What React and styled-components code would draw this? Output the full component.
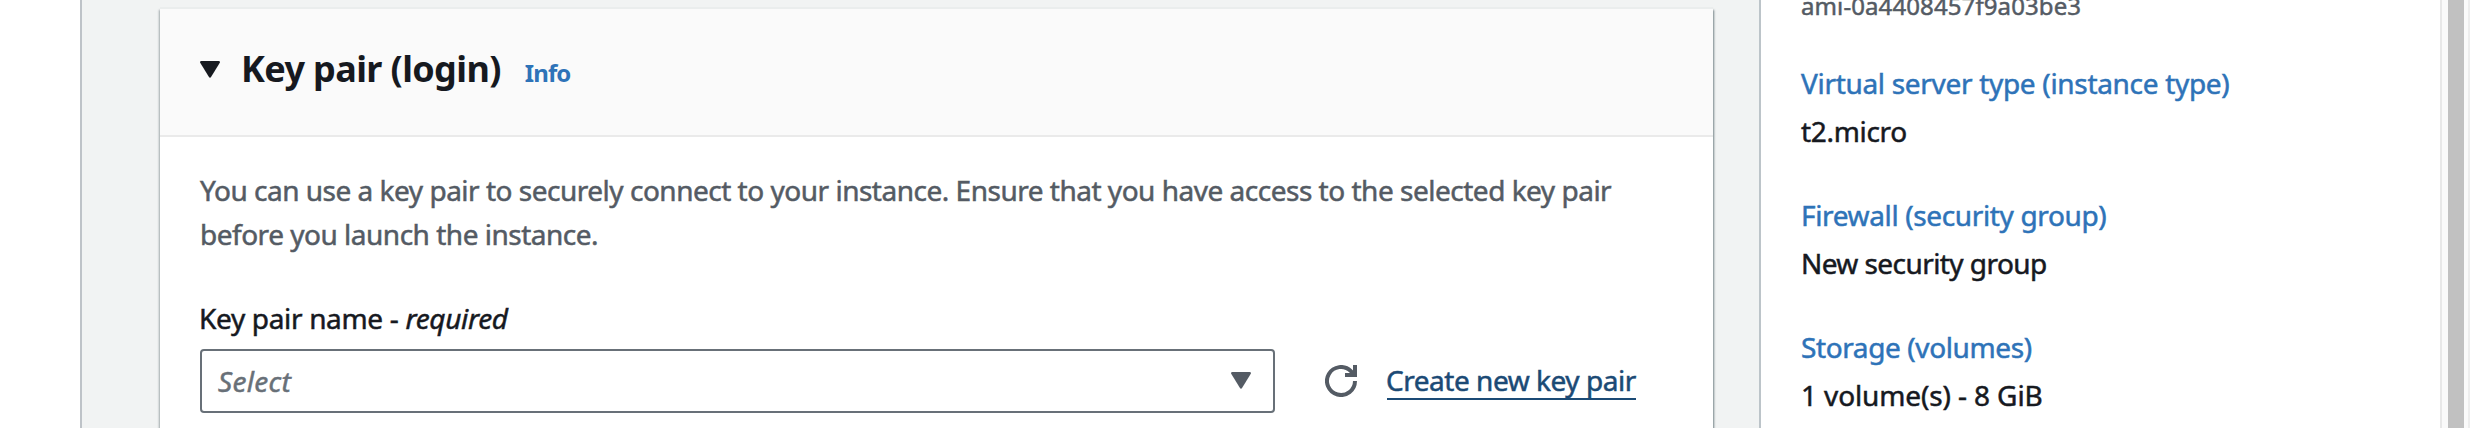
import React from 'react';
import styled, { createGlobalStyle } from 'styled-components';

const GlobalStyle = createGlobalStyle`
  * { box-sizing: border-box; }
  body {
    margin: 0;
    background: #fff;
    color: #16191f;
    font: 400 28px/44px "Noto Sans", "Open Sans", sans-serif;
    overflow: hidden;
  }
`;

const Page = styled.div`
  display: flex;
  width: 2488px;
  height: 428px;
  overflow: hidden;
`;

const Gutter = styled.div`
  flex: none;
  width: 80px;
  background: #fff;
`;

const Main = styled.main`
  flex: none;
  width: 1681px;
  padding: 9px 48px 0 78px;
  background: #f1f3f3;
  border-left: 2px solid #bec3c8;
  border-right: 2px solid #bcc4c9;
`;

const Card = styled.section`
  width: 1553px;
  height: 440px;
  background: #fff;
  box-shadow: 0 -2px 0 #eaeded, 1px 1px 2px rgba(0, 28, 36, 0.5), -1px 1px 2px rgba(0, 28, 36, 0.3);
`;

const CardHeader = styled.header`
  display: flex;
  height: 128px;
  padding: 35px 40px 0;
  background: #fafafa;
  border-bottom: 2px solid #eaeaea;
`;

const Caret = styled.svg`
  flex: none;
  display: block;
  width: 20px;
  height: 17px;
  margin-top: ${(p) => p.$top || 0}px;
  fill: ${(p) => p.$color};
`;

const Title = styled.h2`
  margin: 1px 0 0 21px;
  font-size: 36px;
  font-weight: 700;
  line-height: 48px;
  letter-spacing: -0.62px;
  white-space: nowrap;
`;

const InfoLink = styled.a`
  margin: 9px 0 0 24px;
  color: #2e73b8;
  font-size: 24px;
  font-weight: 700;
  line-height: 40px;
  letter-spacing: -0.9px;
`;

const CardBody = styled.div`
  padding: 31px 40px 0;
`;

const Text = styled.div`
  color: ${(p) => p.$color || '#16191f'};
  letter-spacing: ${(p) => p.$track || 0}px;
  -webkit-text-stroke: 0.5px currentColor;
  white-space: nowrap;
`;

const Description = styled(Text)`
  margin-bottom: 40px;
`;

const Label = styled(Text)`
  margin: 0 0 9px -1px;
`;

const FieldRow = styled.div`
  display: flex;
  align-items: center;
  height: 64px;
`;

const SelectBox = styled.div`
  display: flex;
  align-items: center;
  justify-content: space-between;
  width: 1075px;
  height: 64px;
  padding: 0 22px 1px 16px;
  border: 2px solid #687078;
  border-radius: 4px;
  background: #fff;
`;

const Placeholder = styled(Text)`
  font-style: italic;
`;

const RefreshIcon = styled.svg`
  display: block;
  width: 32px;
  height: 32px;
  margin-left: 50px;
  fill: none;
  stroke: #545b64;
  stroke-width: 4;
`;

const CreateLink = styled(Text)`
  width: 249px;
  height: 37px;
  margin: 0 0 0 30px;
  line-height: 34px;
  text-indent: -1px;
  border-bottom: 2px solid #1b4a75;
`;

const Summary = styled.aside`
  flex: none;
  display: flex;
  flex-direction: column;
  width: 679px;
  padding: 0 41px 0 40px;
  background: #fff;
`;

const AmiId = styled(Text)`
  margin: -10px 0 39px;
  font-size: 24px;
  line-height: 32px;
`;

const SummaryItem = styled.div`
  display: flex;
  flex-direction: column;
  gap: 4px;
  margin-bottom: 40px;
`;

const ScrollTrack = styled.div`
  flex: none;
  width: 30px;
  padding: 0 4px 0 6px;
  background: #fafafa;
  border-left: 2px solid #e8e8e8;
  border-right: 2px solid #ededed;
`;

const ScrollThumb = styled.div`
  width: 16px;
  height: 100%;
  background: #c1c1c1;
`;

const summary = [
  { name: 'Virtual server type (instance type)', value: 't2.micro', nameTrack: -0.31, valueTrack: -0.32 },
  { name: 'Firewall (security group)', value: 'New security group', nameTrack: -0.36, valueTrack: -0.57 },
  { name: 'Storage (volumes)', value: '1 volume(s) - 8 GiB', nameTrack: -0.39, valueTrack: -0.12 },
];

const DownCaret = ({ color, top }) => (
  <Caret viewBox="0 0 20 17" $color={color} $top={top}>
    <path d="M1.4 0h17.2q1.8 0 1.2 1.7L11.2 15.8q-1.2 1.7-2.4 0L.2 1.7Q-.4 0 1.4 0Z" />
  </Caret>
);

export default function App() {
  return (
    <>
      <GlobalStyle />
      <Page>
        <Gutter />
        <Main>
          <Card>
            <CardHeader>
              <DownCaret color="#16191f" top={17} />
              <Title>Key pair (login)</Title>
              <InfoLink>Info</InfoLink>
            </CardHeader>
            <CardBody>
              <Description $color="#545b64" $track={-0.49}>
                You can use a key pair to securely connect to your instance. Ensure that you have access to the selected key pair
                <br />
                before you launch the instance.
              </Description>
              <Label $track={-0.33}>
                Key pair name - <em>required</em>
              </Label>
              <FieldRow>
                <SelectBox>
                  <Placeholder $color="#687078" $track={0.3}>Select</Placeholder>
                  <DownCaret color="#545b64" />
                </SelectBox>
                <RefreshIcon viewBox="0 0 32 32">
                  <path d="M30 16A14 14 0 1 1 25.9 6.1L28.5 9" />
                  <path d="M20 10h10V0" />
                </RefreshIcon>
                <CreateLink $color="#1b4a75" $track={-0.47}>Create new key pair</CreateLink>
              </FieldRow>
            </CardBody>
          </Card>
        </Main>
        <Summary>
          <AmiId $color="#545b64" $track={0.1}>ami-0a4408457f9a03be3</AmiId>
          {summary.map((item) => (
            <SummaryItem key={item.name}>
              <Text $color="#2e73b8" $track={item.nameTrack}>{item.name}</Text>
              <Text $track={item.valueTrack}>{item.value}</Text>
            </SummaryItem>
          ))}
        </Summary>
        <ScrollTrack>
          <ScrollThumb />
        </ScrollTrack>
      </Page>
    </>
  );
}
